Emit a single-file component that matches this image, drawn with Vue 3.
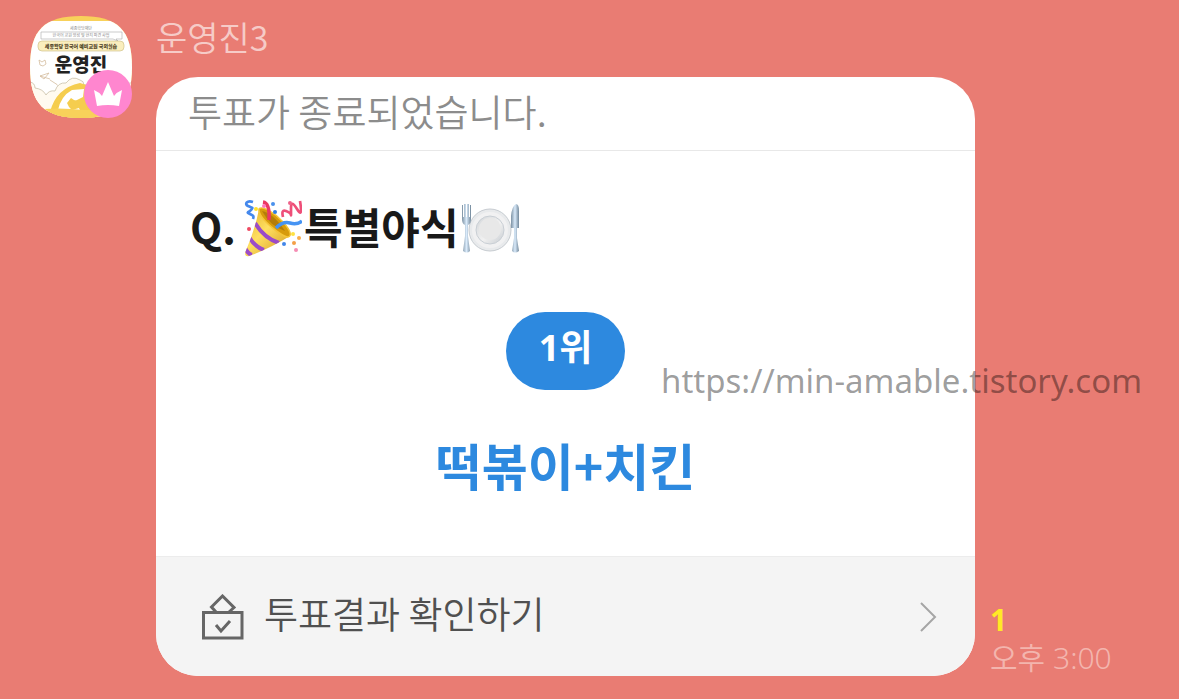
<template>
  <main class="chat">
    <div class="avatar">
      <svg class="avatar-image" viewBox="0 0 102 102" role="img" aria-label="운영진">
        <defs>
          <clipPath id="squircle">
            <path d="M51 0C88 0 102 14 102 51S88 102 51 102 0 88 0 51 14 0 51 0Z" />
          </clipPath>
        </defs>
        <g clip-path="url(#squircle)">
          <rect width="102" height="102" fill="#f8d15a" />
          <rect y="5" width="102" height="90" rx="3" fill="#fff" />
          <text x="51" y="14" class="tiny" text-anchor="middle">세종학당재단</text>
          <path d="M11 16H92V23H86L88 25 83 23H11Z" fill="#fff" stroke="#aaa" stroke-width=".6" />
          <text x="51" y="21" class="tiny" text-anchor="middle">한국어 교원 양성 및 현지 파견 사업</text>
          <rect x="8" y="25" width="86" height="10" rx="4" fill="#faeebd" stroke="#c9ba81" stroke-width=".6" />
          <text x="51" y="32" class="avatar-label" text-anchor="middle">세종학당 한국어 예비교원 국외실습</text>
          <path d="M9 44l3 2 3-2 1 4-3 2-3-1ZM10 60l9-3-5 6ZM10 60l10 3M20 64q8 4 12 10" fill="none" stroke="#d4bd9e" stroke-width=".8" />
          <path d="M0 66q5 1 5 6 8 1 11 7 3-5 9-4 3-9 11-8 6-8 14-3 4 1 4 5l48-2v35H0Z" fill="#fffaf0" stroke="#c9c0a8" stroke-width=".8" />
          <path d="M20 96q6-24 30-29l16 5v30H18Z" fill="#f5cd4e" />
          <path d="M28 94q3-14 14-20l12-1-1 8-8 4 5 9Z" fill="#fff" />
          <path d="M37 87l4-5 3 2 4 1 1 7-7 2-3-3Z" fill="#f5cd4e" />
          <path d="M0 94q28-3 55 0l47 1v7H0Z" fill="#f8d15a" />
          <text x="51" y="56" class="avatar-title" text-anchor="middle">운영진</text>
        </g>
      </svg>
      <span class="crown">
        <svg viewBox="0 0 48 48" aria-hidden="true">
          <path d="M10 20q5 2 8 6l6-14 6 14q3-4 8-6l-3 16q-11-2-22 0Z" fill="#fff" />
        </svg>
      </span>
    </div>

    <section class="message">
      <h2 class="sender">운영진3</h2>
      <div class="message-row">
        <article class="card">
          <p class="card-head">투표가 종료되었습니다.</p>
          <div class="card-body">
            <h1 class="question">
              <span class="prefix">Q.</span>
              <svg class="emoji" viewBox="0 0 58 58" role="img" aria-label="파티">
                <defs>
                  <linearGradient id="gold" x1="0" y1="0" x2="1" y2="1">
                    <stop offset="0" stop-color="#dba111" />
                    <stop offset=".45" stop-color="#ffdf62" />
                    <stop offset="1" stop-color="#c58306" />
                  </linearGradient>
                  <clipPath id="cone">
                    <path d="M15 10Q11 31 1 54q0 4 4 3Q25 50 46 37 42 19 15 10Z" />
                  </clipPath>
                </defs>
                <g clip-path="url(#cone)">
                  <rect width="58" height="58" fill="url(#gold)" />
                  <path d="M11 24Q20 39 35 44M5 38Q11 48 20 51M1 49Q4 55 8 56" fill="none" stroke="#9b4bc8" stroke-width="4" />
                </g>
                <path d="M15 10C18 6 31 14 39 23S48 37 44 38 14 20 15 10Z" fill="#d79b0b" stroke="#f5c539" stroke-width="1.5" />
                <path d="M18 12Q29 14 41 32 26 27 18 12Z" fill="#9c690a" opacity=".6" />
                <path d="M19 3Q26 4 25 21" fill="none" stroke="#eb3864" stroke-width="3.5" />
                <path d="M9 3C3 1 0 5 4 7S10 8 7 11 2 13 6 15 10 17 9 20" fill="none" stroke="#4488ec" stroke-width="2.7" />
                <path d="M32 29Q39 22 46 24T58 22" fill="none" stroke="#4694f3" stroke-width="3.5" />
                <path d="M39 18Q37 10 42 12T47 16 47 9 53 10 56 2" fill="none" stroke="#ee4f78" stroke-width="2.7" />
                <g>
                  <circle cx="29" cy="5" r="2" fill="#4a91ed" />
                  <circle cx="31" cy="13" r="2" fill="#317de1" />
                  <circle cx="12" cy="10" r="2" fill="#ffe22e" />
                  <circle cx="20" cy="7" r="2" fill="#ff7abc" />
                  <circle cx="46" cy="4" r="2" fill="#ef628a" />
                  <circle cx="5" cy="30" r="2" fill="#ef4a62" />
                  <circle cx="49" cy="35" r="2" fill="#ffe240" />
                  <circle cx="55" cy="39" r="2" fill="#f9ad4a" />
                  <circle cx="50" cy="44" r="2" fill="#f4a047" />
                  <circle cx="40" cy="45" r="2" fill="#4387e9" />
                  <circle cx="52" cy="51" r="2" fill="#f58db4" />
                </g>
              </svg>
              <span class="subject">특별야식</span>
              <svg class="emoji" viewBox="0 0 58 58" role="img" aria-label="접시">
                <defs>
                  <linearGradient id="silver">
                    <stop offset="0" stop-color="#7c91a3" />
                    <stop offset=".5" stop-color="#d9eafa" />
                    <stop offset="1" stop-color="#71879a" />
                  </linearGradient>
                  <linearGradient id="plate" x1="0" y1="0" x2="1" y2="1">
                    <stop offset="0" stop-color="#d2d5d9" />
                    <stop offset=".55" stop-color="#f1f1f1" />
                    <stop offset="1" stop-color="#c6cbd0" />
                  </linearGradient>
                </defs>
                <circle cx="29" cy="31" r="21" fill="#e8eaec" stroke="#c6cbd0" />
                <circle cx="29" cy="31" r="18" fill="#f1f1f2" />
                <circle cx="29" cy="31" r="14" fill="url(#plate)" stroke="#c9cfd5" />
                <circle cx="29" cy="30" r="11" fill="#e8e8e8" />
                <path d="M1 6h1v12h1V5h2v13h1V5h2v13h1V6h1v14q0 5-3 6v11l2 15q-3 3-7 0l2-15V26q-3-1-3-6Z" fill="url(#silver)" />
                <path d="M55 5q3 0 3 7v17h-2v10l2 13q-4 3-7 0l2-13V29h-3V17Q51 7 55 5Z" fill="url(#silver)" />
              </svg>
            </h1>
            <strong class="rank">1위</strong>
            <p class="winner">떡볶이+치킨</p>
          </div>
          <button class="result-button" type="button">
            <svg class="ballot" viewBox="0 0 42 46" aria-hidden="true">
              <path d="M1.500 18.500h38.500v25.500H1.500Z" />
              <path d="M14 18 9.500 13 20.500 2 32 13.500 27 18" />
              <path d="M14 31l5 6 9-10" />
            </svg>
            <span class="result-label">투표결과 확인하기</span>
            <svg class="arrow" viewBox="0 0 18 32" aria-hidden="true">
              <path d="M2 2 16 16 2 30" />
            </svg>
          </button>
        </article>
        <aside class="meta">
          <span class="unread">1</span>
          <time datetime="15:00">{{ sentAt }}</time>
        </aside>
      </div>
    </section>

    <a class="site-link" href="https://min-amable.tistory.com">https://min-amable.tistory.com</a>
  </main>
</template>

<script setup>
const sentAt = '오후 3:00'
</script>

<style>
body {
  margin: 0;
  background: #e97c73;
}
</style>

<style scoped>
.chat {
  position: relative;
  display: flex;
  gap: 24px;
  box-sizing: border-box;
  min-height: 100vh;
  padding: 16px 20px 20px 30px;
  background: #e97c73;
  font-family: 'Noto Sans CJK KR', sans-serif;
}

/* Avatar */
.avatar {
  position: relative;
  flex: none;
  width: 102px;
  height: 102px;
}

.avatar-image {
  display: block;
  width: 100%;
}

.tiny {
  font-size: 4px;
  fill: #888;
}

.avatar-label {
  font-size: 5px;
  font-weight: 900;
  fill: #54472a;
}

.avatar-title {
  font-size: 19px;
  font-weight: 900;
  fill: #222;
}

.crown {
  position: absolute;
  right: 0;
  bottom: 0;
  width: 48px;
  height: 48px;
  border-radius: 50%;
  background: #ff86cf;
}

/* Message */
.message {
  flex: 1;
  min-width: 0;
}

.sender {
  margin: 0;
  height: 61px;
  color: #f6cbc7;
  font-size: 34px;
  font-weight: 350;
  line-height: 42px;
}

.message-row {
  display: flex;
  align-items: flex-end;
  gap: 15px;
}

.card {
  flex: 1;
  min-width: 0;
  overflow: hidden;
  border-radius: 42px;
  background: #fff;
}

.card-head {
  margin: 0;
  padding: 8px 32px 13px;
  border-bottom: 1px solid #e8e8e8;
  color: #8c8c8c;
  font-size: 37px;
  font-weight: 350;
  line-height: 52px;
}

.card-body {
  display: flex;
  flex-direction: column;
  align-items: center;
  padding: 48px 34px 56px;
}

.question {
  display: flex;
  align-items: center;
  align-self: stretch;
  margin: 0 0 55px;
  color: #191919;
  font-size: 42px;
  font-weight: 700;
  line-height: 54px;
}

.question span {
  padding-bottom: 4px;
}

.prefix {
  margin-right: 8px;
}

.subject {
  margin: 0 2px;
}

.emoji {
  flex: none;
  width: 58px;
  height: 58px;
}

.rank {
  padding: 8px 33px 14px;
  border-radius: 39px;
  background: #2d89df;
  color: #fff;
  font-family: 'Noto Sans', 'Noto Sans CJK KR', sans-serif;
  font-size: 36px;
  font-weight: 700;
  line-height: 56px;
}

.winner {
  margin: 38px 0 0;
  color: #2d89df;
  font-size: 50px;
  font-weight: 700;
  line-height: 72px;
}

.result-button {
  display: flex;
  align-items: center;
  width: 100%;
  height: 120px;
  padding: 0 38px 0 46px;
  border: 0;
  border-top: 1px solid #ececec;
  background: #f4f4f4;
  color: #505050;
  font-family: inherit;
  font-size: 37px;
  font-weight: 350;
  line-height: 52px;
  text-align: left;
  cursor: pointer;
}

.result-label {
  padding-bottom: 8px;
}

.ballot {
  width: 42px;
  height: 46px;
  margin-right: 20px;
  fill: none;
  stroke: #666;
  stroke-width: 3;
}

.arrow {
  width: 18px;
  height: 32px;
  margin-left: auto;
  fill: none;
  stroke: #a5a5a5;
  stroke-width: 2;
}

.meta {
  display: flex;
  flex-direction: column;
  flex: none;
  width: 169px;
  color: #f3b5ae;
  font-family: 'Noto Sans', 'Noto Sans CJK KR', sans-serif;
  font-size: 30px;
  font-weight: 350;
  line-height: 36px;
}

.unread {
  color: #ffe926;
  font-weight: 700;
  line-height: 40px;
}

.site-link {
  position: absolute;
  top: 358px;
  right: 37px;
  color: rgba(0, 0, 0, 0.4);
  font-family: 'Noto Sans', sans-serif;
  font-size: 33px;
  line-height: 46px;
  text-decoration: none;
}
</style>
